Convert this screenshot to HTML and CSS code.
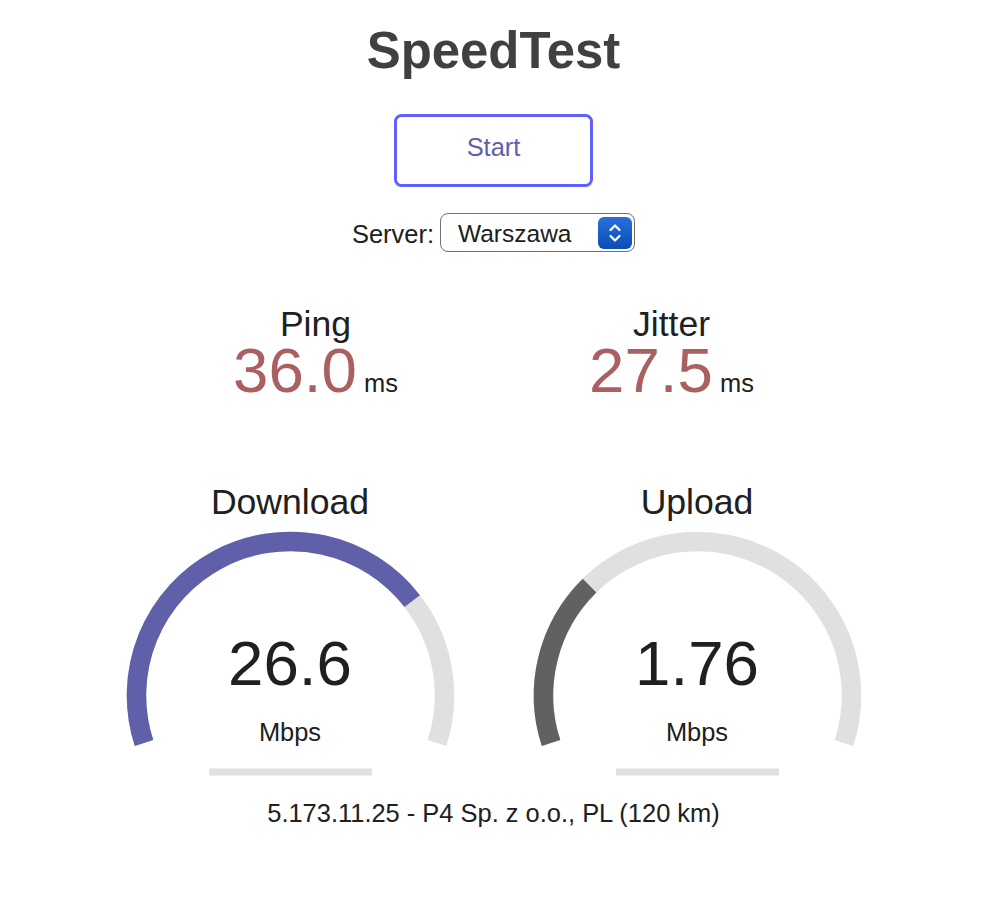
FILE: index.html
```html
<!DOCTYPE html>
<html lang="en">
<head>
<meta charset="utf-8">
<title>SpeedTest</title>
<link rel="stylesheet" href="styles.css">
</head>
<body>
<main class="page">
  <h1 class="title">SpeedTest</h1>
  <div class="start-btn">Start</div>
  <div class="server-area">
    <span class="server-label">Server:</span>
    <div class="select">
      <span class="select-text">Warszawa</span>
      <span class="stepper">
        <svg width="34" height="32" viewBox="0 0 34 32" aria-hidden="true">
          <polyline points="12.5,13 17,8.5 21.5,13" fill="none" stroke="#fff" stroke-width="2.2" stroke-linecap="round" stroke-linejoin="round"/>
          <polyline points="12.5,19 17,23.5 21.5,19" fill="none" stroke="#fff" stroke-width="2.2" stroke-linecap="round" stroke-linejoin="round"/>
        </svg>
      </span>
    </div>
  </div>

  <div class="test-group small">
    <div class="area2">
      <div class="name">Ping</div>
      <div class="value-row"><span class="num red">36.0</span> <span class="unit-inline">ms</span></div>
    </div>
    <div class="area2">
      <div class="name">Jitter</div>
      <div class="value-row"><span class="num red">27.5</span> <span class="unit-inline">ms</span></div>
    </div>
  </div>

  <div class="test-group">
    <div class="area">
      <div class="area-name">Download</div>
      <svg class="meter" viewBox="0 0 407 318" aria-hidden="true">
        <path d="M57.03 264.09 A154 154 0 1 1 349.97 264.09" fill="none" stroke="#E0E0E0" stroke-width="19.5"/>
        <path d="M57.03 264.09 A154 154 0 0 1 325.19 122.10" fill="none" stroke="#6060AA" stroke-width="19.5"/>
        <rect x="122.1" y="289.5" width="162.8" height="7" fill="#E0E0E0"/>
      </svg>
      <div class="meter-text">26.6</div>
      <div class="area-unit">Mbps</div>
    </div>
    <div class="area">
      <div class="area-name">Upload</div>
      <svg class="meter" viewBox="0 0 407 318" aria-hidden="true">
        <path d="M57.03 264.09 A154 154 0 1 1 349.97 264.09" fill="none" stroke="#E0E0E0" stroke-width="19.5"/>
        <path d="M57.03 264.09 A154 154 0 0 1 95.56 106.65" fill="none" stroke="#616161" stroke-width="19.5"/>
        <rect x="122.1" y="289.5" width="162.8" height="7" fill="#E0E0E0"/>
      </svg>
      <div class="meter-text">1.76</div>
      <div class="area-unit">Mbps</div>
    </div>
  </div>

  <div class="ip-area">5.173.11.25 - P4 Sp. z o.o., PL (120 km)</div>
</main>
</body>
</html>
```

FILE: styles.css
```css
html, body {
  margin: 0;
  padding: 0;
  background: #FFFFFF;
  color: #202020;
}

body {
  font-family: "Liberation Sans", Arial, Helvetica, sans-serif;
  font-size: 25.45px;
}

.page {
  width: 987px;
  display: flex;
  flex-direction: column;
  align-items: center;
  text-align: center;
}

.title {
  margin: 21px 0 0;
  font-size: 50.9px;
  line-height: 60px;
  font-weight: bold;
  color: #404040;
}

.start-btn {
  margin-top: 33px;
  box-sizing: border-box;
  width: 199px;
  height: 73px;
  border: 3px solid #6060FF;
  border-radius: 7.5px;
  color: #6060AA;
  font-size: 25.45px;
  line-height: 61px;
}

.server-area {
  margin-top: 26px;
  height: 39px;
  display: flex;
  align-items: center;
  gap: 6px;
}

.server-label {
  line-height: 28px;
  padding-top: 3px;
}

.select {
  box-sizing: border-box;
  width: 195px;
  height: 39px;
  border: 1.5px solid #727272;
  border-radius: 8px;
  display: flex;
  align-items: center;
  justify-content: space-between;
  padding: 0 2px 0 17px;
  background: #fff;
}

.select-text {
  font-size: 24.5px;
  line-height: 28px;
  padding-top: 3px;
}

.stepper {
  width: 34px;
  height: 32px;
  border-radius: 6px;
  background: linear-gradient(#2a6fdc, #0a4db4);
  display: flex;
}

.test-group {
  display: flex;
  justify-content: center;
}

.test-group.small {
  margin-top: 52px;
  height: 175px;
}

.area2 {
  width: 356px;
}

.name {
  font-size: 35.6px;
  line-height: 41px;
}

.value-row {
  line-height: 50px;
  height: 50px;
}

.num {
  display: inline-block;
  font-size: 63.6px;
  line-height: 50px;
}

.red {
  color: #AA6060;
}

.unit-inline {
  display: inline-block;
  font-size: 25.45px;
  line-height: 24px;
}

.area {
  position: relative;
  width: 407px;
  height: 318px;
}

.meter {
  position: absolute;
  top: 0;
  left: 0;
  width: 407px;
  height: 318px;
}

.area-name {
  position: absolute;
  top: 2.5px;
  left: 0;
  width: 100%;
  font-size: 35.6px;
  line-height: 41px;
  z-index: 2;
}

.meter-text {
  position: absolute;
  bottom: 98.6px;
  left: 0;
  width: 100%;
  font-size: 63.6px;
  line-height: 71px;
  z-index: 2;
}

.area-unit {
  position: absolute;
  bottom: 50.9px;
  left: 0;
  width: 100%;
  line-height: 28.4px;
  z-index: 2;
}

.ip-area {
  margin-top: 2px;
  line-height: 28px;
}
```
